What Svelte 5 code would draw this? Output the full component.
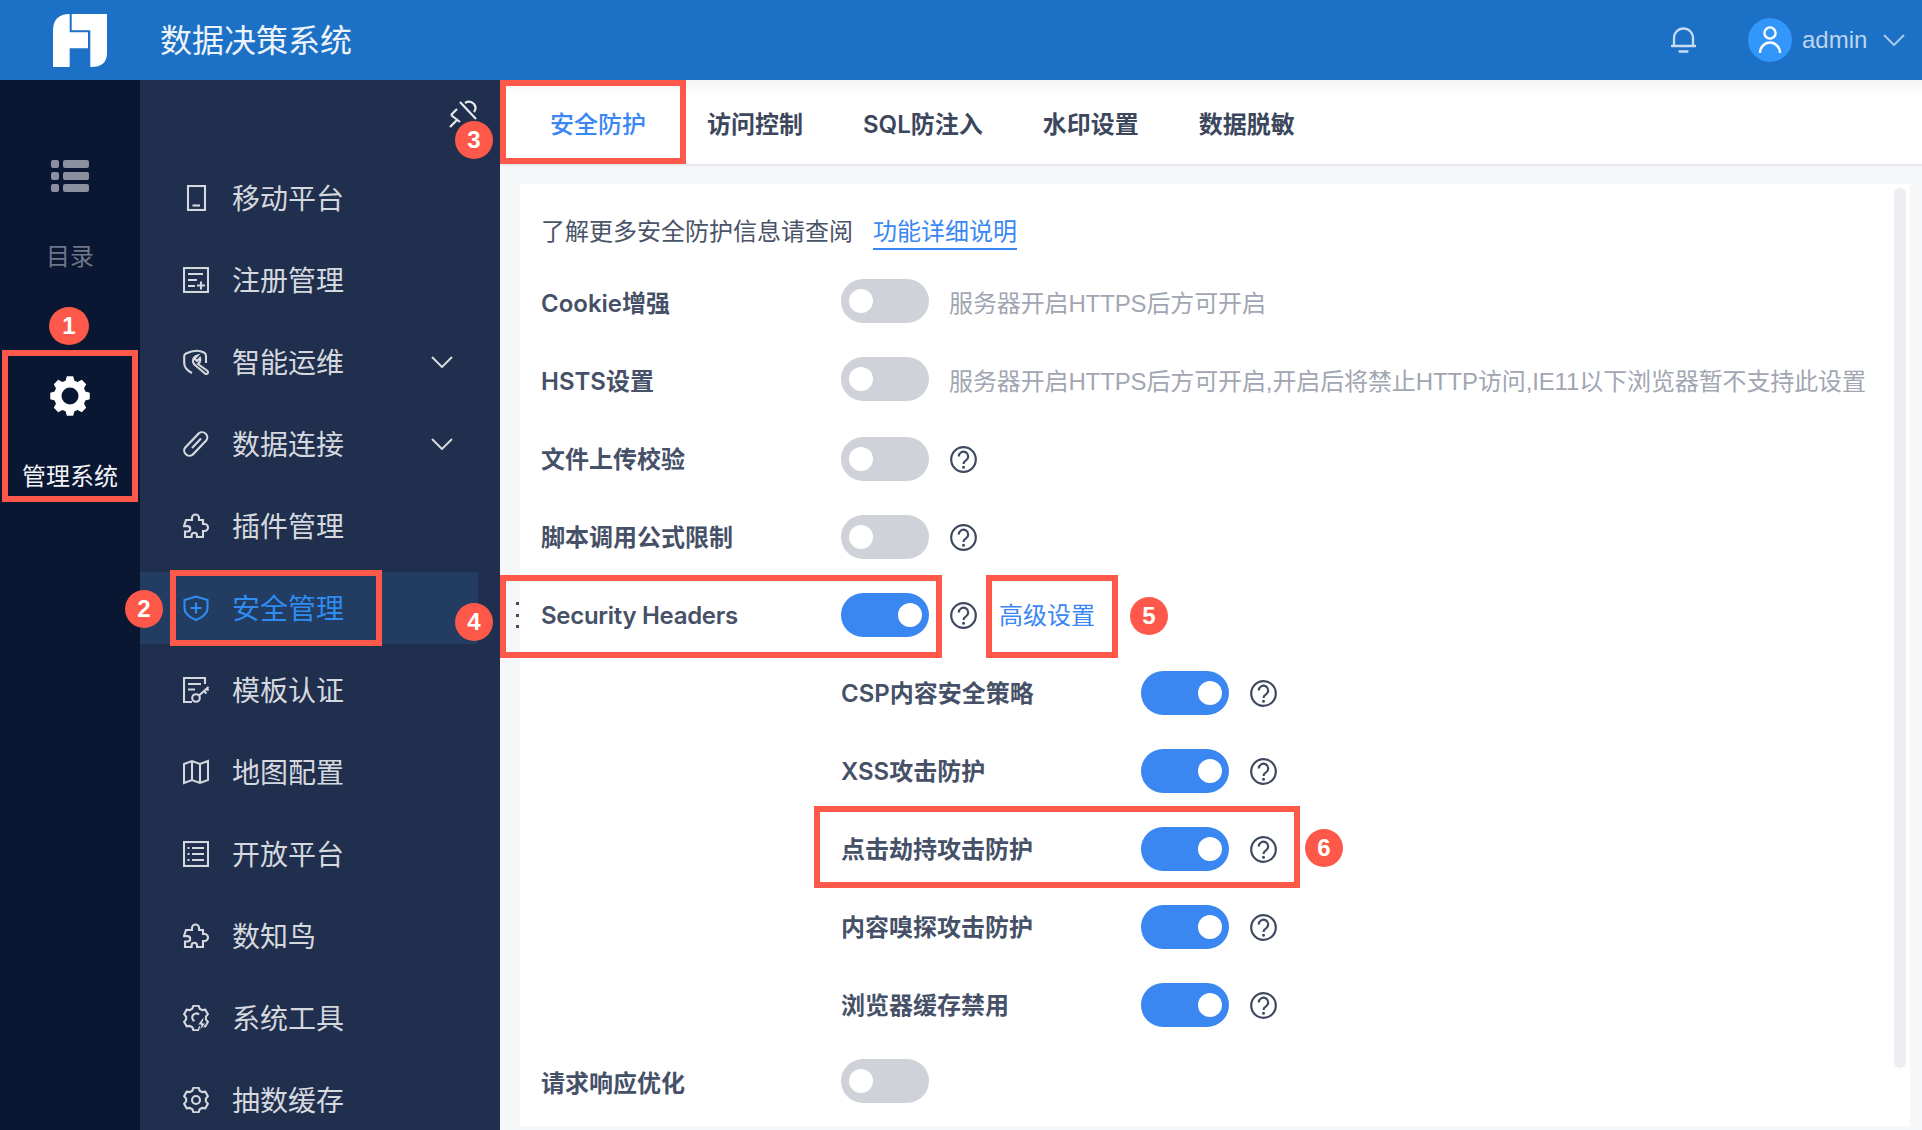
<script>
  function gear(cx, cy, R, r, n) {
    const pts = [];
    const step = (Math.PI * 2) / n;
    for (let i = 0; i < n; i++) {
      const a = i * step - Math.PI / 2;
      const w = step * 0.2;
      const p = (rad, ang) => `${(cx + rad * Math.cos(ang)).toFixed(2)} ${(cy + rad * Math.sin(ang)).toFixed(2)}`;
      pts.push(p(r, a - step * 0.36), p(R, a - w), p(R, a + w), p(r, a + step * 0.36));
    }
    return 'M' + pts.join(' L') + ' Z';
  }
  const hole = (cx, cy, r) => `M${cx - r} ${cy} a${r} ${r} 0 1 0 ${r * 2} 0 a${r} ${r} 0 1 0 ${-r * 2} 0 Z`;
  const solidGear = gear(20, 20, 20, 16, 8) + ' ' + hole(20, 20, 8.5);
  const lineGear = gear(13, 13, 12.5, 10, 6);

  const menu = [
    { t: '移动平台', i: 'phone' },
    { t: '注册管理', i: 'form' },
    { t: '智能运维', i: 'wrench', arrow: true },
    { t: '数据连接', i: 'clip', arrow: true },
    { t: '插件管理', i: 'puzzle' },
    { t: '安全管理', i: 'shield', active: true },
    { t: '模板认证', i: 'doc' },
    { t: '地图配置', i: 'map' },
    { t: '开放平台', i: 'list' },
    { t: '数知鸟', i: 'puzzle' },
    { t: '系统工具', i: 'tool' },
    { t: '抽数缓存', i: 'gear' }
  ];
  const tabs = ['安全防护', '访问控制', 'SQL防注入', '水印设置', '数据脱敏'];
  const subs = ['CSP内容安全策略', 'XSS攻击防护', '点击劫持攻击防护', '内容嗅探攻击防护', '浏览器缓存禁用'];
</script>

{#snippet help()}
  <svg class="help" viewBox="0 0 27 27" aria-hidden="true">
    <circle cx="13.5" cy="13.5" r="12.3" />
    <path d="M8.8 10.4 a4.7 4.7 0 1 1 7.2 4 q-2.5 1.4 -2.5 3.6" />
    <circle class="dot" cx="13.5" cy="21.3" r="1.5" />
  </svg>
{/snippet}

{#snippet toggle(on, up = false)}
  <span class="toggle" class:on class:up><span class="knob"></span></span>
{/snippet}

{#snippet chevron()}
  <svg class="chev" viewBox="0 0 22 12" aria-hidden="true"><path d="M1 1 L11 11 L21 1" /></svg>
{/snippet}

<div class="page">
  <header class="top">
    <svg class="logo" viewBox="0 0 54 53" aria-hidden="true">
      <path d="M0 17 Q0 0 16.7 0 V18.3 H35 V34.3 H16.7 V53 H0 Z" />
      <path d="M18.7 0 H54 V39 Q54 53 38 53 H37.3 V16.2 H18.7 Z" />
    </svg>
    <div class="title">数据决策系统</div>
    <svg class="bell" viewBox="0 0 25 27" aria-hidden="true">
      <path d="M3 19.5 V12 a9.5 9.5 0 0 1 19 0 V19.5" />
      <path d="M0.5 20 H24.5 M8.5 25.5 H16.5" />
    </svg>
    <div class="avatar">
      <svg viewBox="0 0 44 44" aria-hidden="true">
        <circle cx="22" cy="15" r="5.6" />
        <path d="M12 35 a10 10.5 0 0 1 20 0" />
      </svg>
    </div>
    <span class="user">admin</span>
    {@render chevron()}
  </header>

  <div class="body">
    <nav class="rail">
      <svg class="rail-list" viewBox="0 0 38 32" aria-hidden="true">
        <rect x="0" y="0" width="8" height="8" rx="2" /><rect x="12" y="0" width="26" height="8" rx="2" />
        <rect x="0" y="12" width="8" height="8" rx="2" /><rect x="12" y="12" width="26" height="8" rx="2" />
        <rect x="0" y="24" width="8" height="8" rx="2" /><rect x="12" y="24" width="26" height="8" rx="2" />
      </svg>
      <div class="rail-label muted">目录</div>
      <svg class="rail-gear" viewBox="0 0 40 40" aria-hidden="true"><path d={solidGear} fill-rule="evenodd" /></svg>
      <div class="rail-label strong">管理系统</div>
    </nav>

    <aside class="side">
      <div class="side-top"></div>
      {#each menu as m}
        <div class="item" class:active={m.active}>
          <svg class="ico" viewBox="0 0 26 26" aria-hidden="true">
            {#if m.i === 'phone'}
              <rect x="5" y="1" width="17" height="24" /><path d="M9.5 20.5 H17" />
            {:else if m.i === 'form'}
              <rect x="1" y="1" width="24" height="24" /><path d="M5 7 H20 M5 13 H14 M5 19 H12 M14 18.5 H22 M18 14.5 V22.5" />
            {:else if m.i === 'wrench'}
              <path d="M9 24 Q1.2 20 1.2 14 V7 Q1.2 5.5 3 4.5 Q13 -0.5 21 3.5 Q23 4.5 23 7 V14" />
              <path d="M14.5 6.5 L11.5 9.5 L14 12 L17 9 A5.5 5.5 0 0 1 15 15 L24.5 22 Q25.5 23.5 24.5 24.5 Q23 25.5 22 24.5 L12.5 16.5 A5.5 5.5 0 0 1 14.5 6.5 Z" />
            {:else if m.i === 'clip'}
              <path d="M23.2 9.6 A5.2 5.2 0 0 0 15.8 2.4 L2.3 16.4 A5.2 5.2 0 0 0 9.7 23.6 L23.2 9.6 M9 17 L18 7.5" />
            {:else if m.i === 'puzzle'}
              <path d="M3 7 H9 V5 a3.5 3.5 0 0 1 7 0 V7 H20 V11 h1.5 a3.5 3.5 0 0 1 0 7 H20 V24 H14 V22.5 a2.7 2.7 0 0 0 -5.4 0 V24 H2 V18.5 H4.5 a2.7 2.7 0 0 0 0 -5.4 H1 Z" />
            {:else if m.i === 'shield'}
              <path d="M13 1.5 L24.5 5 V13 Q24.5 20.5 13 25 Q1.5 20.5 1.5 13 V5 Z" /><path d="M7.5 13 H18.5 M13 7.5 V18.5" />
            {:else if m.i === 'doc'}
              <path d="M22 7 V1 H1 V25 H9" /><path d="M5 7 H18 M5 12.5 H12" />
              <circle cx="13" cy="21" r="3.8" /><path d="M16 18.5 L25.5 10 M21 14 L23.5 16.5 M24 11.5 L25.5 13.5" />
            {:else if m.i === 'map'}
              <path d="M1 5 L9 2 L17 5 L25 2 V21 L17 24 L9 21 L1 24 Z" /><path d="M9 2 V21 M17 5 V24" />
            {:else if m.i === 'list'}
              <rect x="1" y="1" width="24" height="24" /><path d="M9 7 H21 M9 13 H21 M9 19 H21 M4.5 7 H6.5 M4.5 13 H6.5 M4.5 19 H6.5" />
            {:else if m.i === 'tool'}
              <path d={lineGear} /><path d="M16 9.5 a4 4 0 1 0 -4.5 6.5" />
              <path class="bolt" d="M19.5 13 L14.5 20 H18 L16.5 26 L23 18 H19.5 L21.5 13 Z" />
            {:else}
              <path d={lineGear} /><circle cx="13" cy="13" r="4" />
            {/if}
          </svg>
          <span class="item-text">{m.t}</span>
          {#if m.arrow}{@render chevron()}{/if}
        </div>
      {/each}
    </aside>

    <main class="main">
      <div class="tabs">
        {#each tabs as t, i}
          <div class="tab" class:cur={i === 0}>{t}</div>
        {/each}
      </div>
      <div class="content">
        <section class="card">
          <div class="intro">了解更多安全防护信息请查阅<span class="doc-link">功能详细说明</span></div>

          <div class="row"><span class="label">Cookie增强</span>{@render toggle(false, true)}<span class="hint">服务器开启HTTPS后方可开启</span></div>
          <div class="row"><span class="label">HSTS设置</span>{@render toggle(false, true)}<span class="hint">服务器开启HTTPS后方可开启,开启后将禁止HTTP访问,IE11以下浏览器暂不支持此设置</span></div>
          <div class="row"><span class="label">文件上传校验</span>{@render toggle(false)}{@render help()}</div>
          <div class="row"><span class="label">脚本调用公式限制</span>{@render toggle(false)}{@render help()}</div>
          <div class="row">
            <span class="label latin">Security Headers</span>{@render toggle(true)}{@render help()}<span class="adv">高级设置</span>
          </div>
          {#each subs as s}
            <div class="row sub"><span class="label">{s}</span>{@render toggle(true)}{@render help()}</div>
          {/each}
          <div class="row"><span class="label">请求响应优化</span>{@render toggle(false, true)}</div>
          <div class="scroll"></div>
        </section>
      </div>
      <div class="grip"><i></i><i></i><i></i></div>
    </main>
  </div>

  <svg class="pin" viewBox="0 0 50 50" aria-hidden="true">
    <path d="M20 7 L36 24 M11 20 L17 14 M11 20 L20 27 M10 32 L17 25 M25 8 Q30 5 34 9 Q37 13 34 17" />
  </svg>

  <div class="box b1"></div>
  <div class="box b2"></div>
  <div class="box b3"></div>
  <div class="box b4"></div>
  <div class="box b5"></div>
  <div class="box b6"></div>
  <div class="badge n1">1</div>
  <div class="badge n2">2</div>
  <div class="badge n3">3</div>
  <div class="badge n4">4</div>
  <div class="badge n5">5</div>
  <div class="badge n6">6</div>
</div>

<style>
  :global(body) { margin: 0; background: #f6f7f9; overflow: hidden; }
  .page {
    position: relative; width: 1922px; height: 1130px; overflow: hidden;
    font-family: Inter, "Noto Sans CJK SC", sans-serif; display: flex; flex-direction: column;
  }
  .top { height: 80px; flex: none; background: #1c71c6; display: flex; align-items: center; }
  .logo { width: 54px; height: 53px; margin-left: 53px; fill: #fff; }
  .title { margin-left: 53px; margin-top: -4px; font-size: 32px; color: #eef3fa; flex: 1; }
  .bell { width: 25px; height: 27px; fill: none; stroke: #c9dbf1; stroke-width: 2.3; stroke-linecap: round; margin-right: 52px; margin-top: -2px; }
  .avatar { width: 44px; height: 44px; border-radius: 50%; background: #3296fa; }
  .avatar svg { display: block; width: 44px; height: 44px; fill: none; stroke: #fff; stroke-width: 2.4; }
  .user { margin-left: 10px; font: 24px "Liberation Sans", sans-serif; color: #bcd4ef; width: 81px; }
  .top .chev { stroke: #a9c8ea; margin-right: 17px; }
  .chev { width: 22px; height: 12px; fill: none; stroke: #d5d8df; stroke-width: 2; flex: none; }

  .body { flex: 1; display: flex; min-height: 0; }
  .rail {
    width: 140px; flex: none; background: #0a1732; display: flex; flex-direction: column; align-items: center;
  }
  .rail-list { width: 38px; height: 32px; margin-top: 80px; fill: #8a909f; }
  .rail-label { font-size: 24px; line-height: 32px; }
  .muted { color: #6e7688; margin-top: 49px; }
  .rail-gear { width: 40px; height: 40px; margin-top: 103px; fill: #fff; }
  .strong { color: #f2f3f6; margin-top: 45px; }

  .side { width: 360px; flex: none; background: #202f4d; overflow: hidden; }
  .side-top { height: 77px; }
  .item { height: 82px; display: flex; align-items: center; padding-left: 43px; color: #d5d8df; position: relative; margin-right: 22px; box-sizing: border-box; }
  .item.active { color: #2f8df2; }
  .item.active::before { content: ""; position: absolute; left: 0; right: 0; top: 5px; bottom: 5px; background: #223c62; }
  .ico { width: 26px; height: 26px; flex: none; fill: none; stroke: currentColor; stroke-width: 2.1; position: relative; }
  .ico .bolt { fill: currentColor; stroke: #202f4d; stroke-width: 1; }
  .item-text { font-size: 28px; margin-left: 23px; margin-top: -3px; flex: 1; position: relative; }
  .item .chev { margin-right: 25px; }

  .main { flex: 1; min-width: 0; display: flex; flex-direction: column; position: relative; }
  .tabs {
    height: 84px; flex: none; display: flex; padding-left: 20px;
    background: linear-gradient(#f4f4f5, #fff 16px); border-bottom: 2px solid #e8e9ee; align-items: center;
  }
  .tab { padding: 0 30px; font-size: 24px; font-weight: 600; color: #3c475d; line-height: 84px; margin-top: 6px; }
  .tab.cur { color: #3a87f3; font-weight: 500; }
  .tab:not(.cur) { position: relative; left: 1px; }
  .content { flex: 1; min-height: 0; background: #f6f7f9; padding: 18px 12px 4px 20px; }
  .card { background: #fff; height: 100%; padding: 30px 0 0 21px; box-sizing: border-box; position: relative; }
  .intro { font-size: 24px; line-height: 36px; color: #4a5468; margin-bottom: 14px; height: 36px; white-space: nowrap; }
  .doc-link { margin-left: 20px; color: #3a87f3; display: inline-block; line-height: 32px; border-bottom: 2px solid #3a87f3; }
  .row { height: 78px; display: flex; align-items: center; white-space: nowrap; }
  .row.sub { padding-left: 300px; }
  .label { width: 300px; flex: none; font-size: 24px; font-weight: 600; color: #465168; margin-top: -3px; }
  .label.latin { margin-top: 0; letter-spacing: -0.3px; }
  .toggle { width: 88px; height: 44px; border-radius: 22px; background: #cfd2d9; position: relative; flex: none; }
  .toggle.up { margin-bottom: 4px; }
  .toggle.on { background: #3b87f2; }
  .knob { position: absolute; top: 10px; left: 8px; width: 24px; height: 24px; border-radius: 50%; background: #fff; }
  .on .knob { left: auto; right: 7px; }
  .hint { margin-left: 20px; margin-top: -3px; font-family: "Liberation Sans", "Noto Sans CJK SC", sans-serif; font-size: 24px; letter-spacing: -0.12px; color: #a1a6b2; }
  .help { width: 27px; height: 27px; margin-left: 21px; flex: none; fill: none; stroke: #3f4a61; stroke-width: 2.2; }
  .help .dot { fill: #3f4a61; stroke: none; }
  .adv { margin-left: 22px; margin-top: -3px; font-size: 24px; color: #3a87f3; }
  .scroll { position: absolute; top: 4px; right: 4px; width: 12px; height: 880px; border-radius: 6px; background: #eceef1; }
  .grip { position: absolute; left: 16px; top: 522px; display: flex; flex-direction: column; gap: 8.5px; }
  .grip i { display: block; width: 3px; height: 3px; background: #3f4a61; }

  .pin { position: absolute; left: 440px; top: 95px; width: 50px; height: 50px; fill: none; stroke: #e9ebef; stroke-width: 2.2; }
  .box { position: absolute; border: 6px solid #fd5849; box-sizing: border-box; }
  .b1 { left: 2px; top: 350px; width: 136px; height: 152px; }
  .b2 { left: 170px; top: 570px; width: 212px; height: 76px; }
  .b3 { left: 500px; top: 80px; width: 186px; height: 84px; }
  .b4 { left: 500px; top: 575px; width: 442px; height: 83px; }
  .b5 { left: 986px; top: 575px; width: 132px; height: 83px; }
  .b6 { left: 814px; top: 806px; width: 486px; height: 82px; }
  .badge {
    position: absolute; width: 38px; height: 38px; border-radius: 50%; background: #fd5849; color: #fff;
    font: 700 24px/38px "Liberation Sans", sans-serif; text-align: center;
  }
  .n1 { left: 49px; top: 307px; width: 40px; }
  .n2 { left: 125px; top: 590px; }
  .n3 { left: 455px; top: 121px; }
  .n4 { left: 455px; top: 603px; }
  .n5 { left: 1130px; top: 597px; }
  .n6 { left: 1305px; top: 829px; }
</style>
